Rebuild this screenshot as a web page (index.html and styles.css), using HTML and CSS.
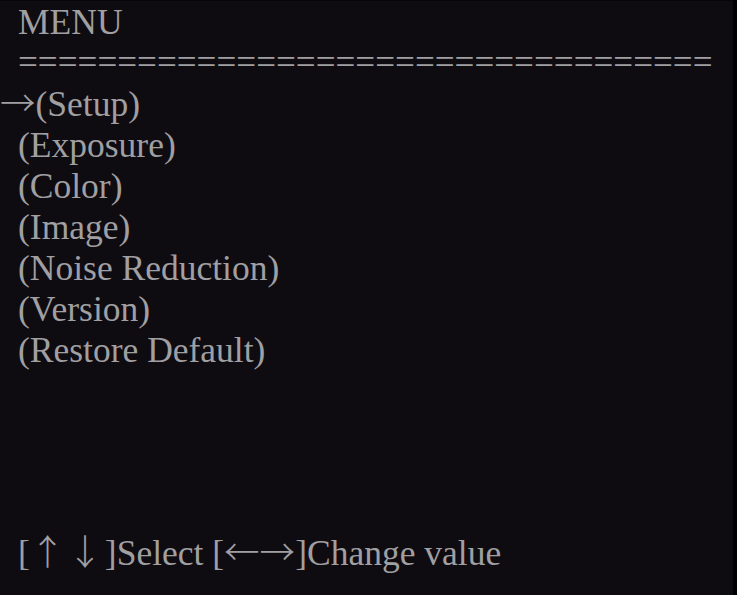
FILE: index.html
```html
<!DOCTYPE html>
<html lang="en">
<head>
  <meta charset="UTF-8">
  <title>OSD Menu</title>
  <meta name="viewport" content="width=device-width, initial-scale=1.0">
  <link rel="stylesheet" href="styles.css">
</head>
<body>

  <div class="osd">
    <div class="titulo">MENU</div>
    <div class="separador">===================================</div>

    <ul class="menu">
      <li class="ativo"><span class="seta">→</span>(Setup)</li>
      <li>(Exposure)</li>
      <li>(Color)</li>
      <li>(Image)</li>
      <li>(Noise Reduction)</li>
      <li>(Version)</li>
      <li>(Restore Default)</li>
    </ul>

    <div class="rodape">[<span class="seta vertical">↑↓</span>]Select [<span class="seta">←→</span>]Change value</div>
  </div>

</body>
</html>
```

FILE: styles.css
```css
html, body {
  margin: 0;
  padding: 0;
  background-color: #000;
}

.osd {
  box-sizing: border-box;
  width: 733px;
  height: 595px;
  background-color: #0e0c11;
  border-top: 1px solid #060508;
  color: #a09fa2;
  font-family: "Liberation Serif", "Times New Roman", serif;
  font-size: 35.5px;
  line-height: 40px;
  padding: 1px 0 22px 18px;
  display: flex;
  flex-direction: column;
  white-space: nowrap;
}

.titulo {
  line-height: 40px;
}

.separador {
  font-size: 35.2px;
  padding-top: 3px;
  line-height: 35px;
}

.menu {
  list-style: none;
  margin: 0;
  padding: 0;
}

.menu li {
  line-height: 41px;
}

.menu li.ativo {
  margin-left: -18px;
}

.seta {
  font-family: "Noto Sans CJK SC", sans-serif;
  font-weight: 300;
}

.seta.vertical {
  letter-spacing: 2px;
}

.rodape {
  margin-top: auto;
}
```
